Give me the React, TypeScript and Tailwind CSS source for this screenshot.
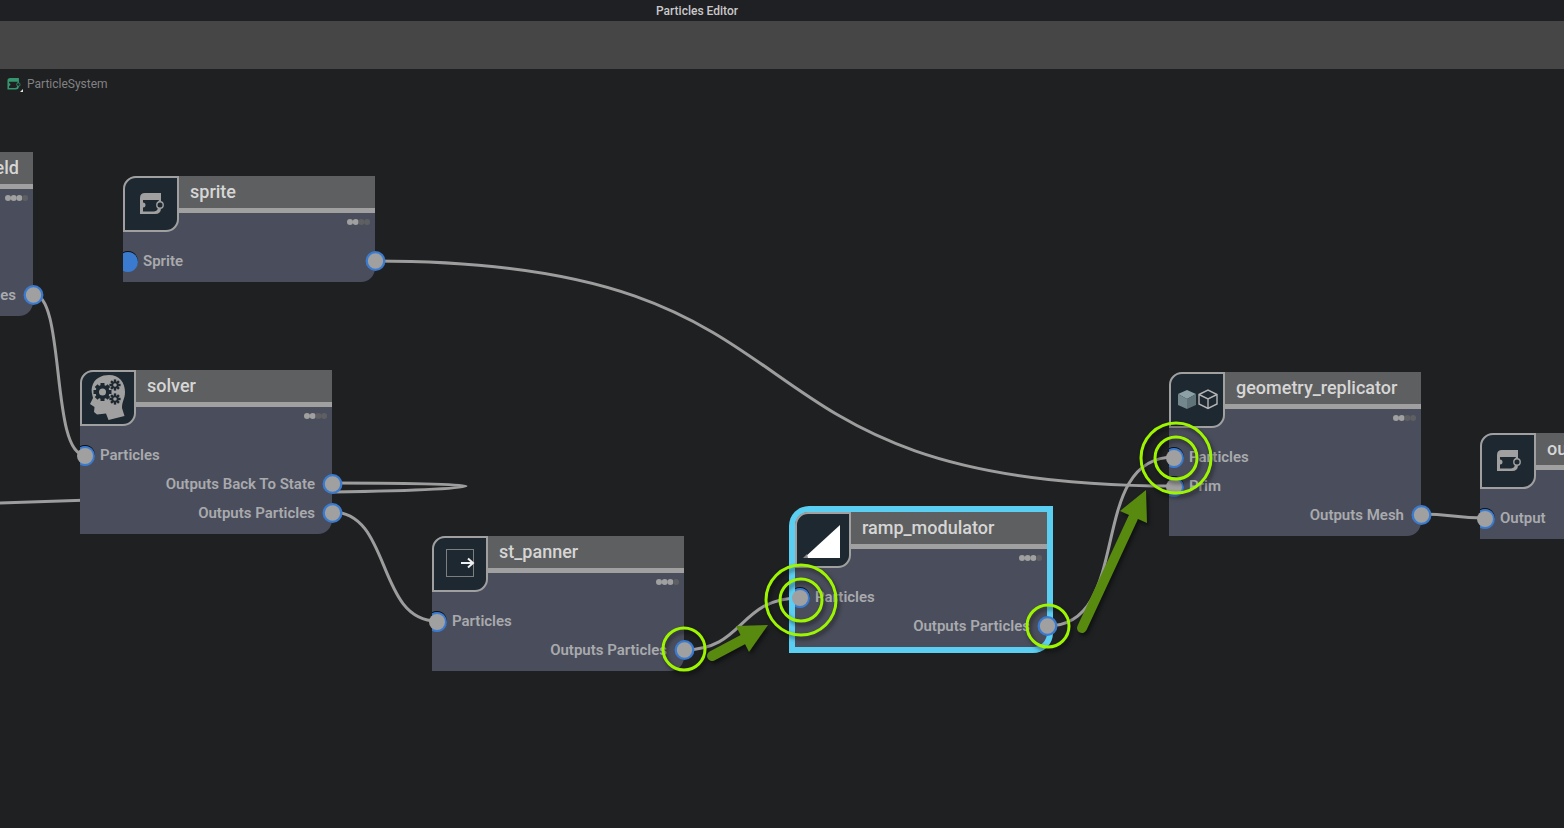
import type { ReactNode } from "react";
import { clsx } from "clsx";

type PortRow = {
    label?: string;
    side: "in" | "out";
    connected?: boolean;
    passThrough?: boolean;
};

type GraphNode = {
    id: string;
    title: string;
    place: string;
    icon: ReactNode;
    level: number;
    rows: PortRow[];
    selected?: boolean;
    alignEnd?: boolean;
};

function ParticleGlyph({ className }: { className?: string }) {
    return (
        <svg viewBox="0 0 24 22" className={className} fill="currentColor" aria-hidden="true">
            <path
                fillRule="evenodd"
                d="M0 21V5Q0 0 5 0H21V9V15Q21 21 15 21ZM3 7V9.500A2.500 2.500 0 0 1 3 14.500V18.500H14Q18 18 18 14V9L19 7Z"
            />
            <circle cx="20" cy="12" r="3.200" fill="#1e2830" stroke="currentColor" strokeWidth="1.400" />
        </svg>
    );
}

function Gear({ cx, cy, r, hole, width }: { cx: number; cy: number; r: number; hole: number; width: number }) {
    return (
        <g fill="#1e2830">
            <circle cx={cx} cy={cy} r={r - 2} />
            {[0, 45, 90, 135].map((a) => (
                <rect
                    key={a}
                    x={cx - width / 2}
                    y={cy - r}
                    width={width}
                    height={r * 2}
                    transform={`rotate(${a} ${cx} ${cy})`}
                />
            ))}
            <circle cx={cx} cy={cy} r={hole} fill="#a0a0a0" />
        </g>
    );
}

function HeadIcon() {
    return (
        <svg viewBox="0 0 52 52" className="size-full" aria-hidden="true">
            <path
                d="M10 15C12 6 20 3 27 3C37 3 43 10 43 20C43 27 40 29 40 36L42.500 44L26.500 48L24 41.500L15 42.500L12 40L12.500 35L8 32L11 26C10 22 9 18 10 15Z"
                fill="#a0a0a0"
            />
            <Gear cx={20.5} cy={20} r={9} hole={3.5} width={4} />
            <Gear cx={33} cy={13} r={5.6} hole={1.8} width={2.4} />
            <Gear cx={33} cy={27} r={5.6} hole={1.8} width={2.4} />
        </svg>
    );
}

function PannerIcon() {
    return (
        <svg viewBox="0 0 52 52" className="size-full" fill="none" aria-hidden="true">
            <rect x="12.5" y="11.5" width="27" height="27" stroke="#7c7f80" />
            <path d="M27 25H39M34 20.500L39 25L34 29.500" stroke="#f0f0f0" strokeWidth="2" />
        </svg>
    );
}

function RampIcon() {
    return (
        <svg viewBox="0 0 52 52" className="size-full" aria-hidden="true">
            <path d="M7 44L43 11V44Z" fill="#fff" />
            <path d="M6 44L10 40L11 44Z" fill="#8a8a8a" />
        </svg>
    );
}

function CubesIcon() {
    return (
        <svg viewBox="0 0 52 52" className="size-full" aria-hidden="true">
            <path d="M7 20L16 16L25 20L16 25Z" fill="#8da0a5" />
            <path d="M7 20L16 25V35L7 31Z" fill="#73878d" />
            <path d="M25 20L16 25V35L25 31Z" fill="#5f7379" />
            <path
                d="M28 20.500L37 16L46 20.500V30L37 34.500L28 30ZM28 20.500L37 25L46 20.500M37 25V34.500"
                fill="none"
                stroke="#b4b4b4"
                strokeWidth="1.4"
            />
        </svg>
    );
}

function InPort({ connected }: { connected?: boolean }) {
    return (
        <svg width="15" height="29" className="shrink-0 overflow-visible" aria-hidden="true">
            <path d="M0 5.300A10 10 0 1 1 0 22.700Z" fill="#0d1118" />
            <path d="M0 6.300A10 10 0 1 1 0 23.700Z" fill="#3a7bd0" />
            {connected ? <circle cx="5" cy="15" r="8" fill="#a0a0a0" /> : null}
        </svg>
    );
}

function OutPort() {
    return (
        <svg width="20" height="29" className="-mr-2.5 shrink-0 overflow-visible" aria-hidden="true">
            <circle cx="10.500" cy="14" r="8.800" fill="#a0a0a0" stroke="#3a7bd0" strokeWidth="2.300" />
        </svg>
    );
}

function LevelDots({ level }: { level: number }) {
    return (
        <svg width="24" height="8" aria-hidden="true">
            {[0, 1, 2, 3].map((i) => (
                <circle key={i} cx={i * 5.7 + 3} cy="4" r="3" fill={i < level ? "#a0a0a0" : "#5e5f62"} />
            ))}
        </svg>
    );
}

function Node({ node }: { node: GraphNode }) {
    return (
        <section
            aria-label={node.title}
            className={clsx(
                "absolute w-[252px] rounded-tl-[14px] rounded-br-[14px] bg-[#4a4e5c] pb-1.5",
                node.place,
                node.selected && "ring-6 ring-[#5bcff2]",
            )}
        >
            <header className="flex h-[71px] items-start">
                <div className="flex size-14 shrink-0 items-center justify-center rounded-tl-[13px] rounded-br-[13px] border-2 border-[#a0a0a0] bg-[#1e2830] text-[#a0a0a0]">
                    {node.icon}
                </div>
                <div className="flex min-w-0 grow flex-col items-end">
                    <h2
                        className={clsx(
                            "h-[37px] w-full border-b-5 border-[#a0a0a0] bg-[#5e5f60] px-[11px] text-lg leading-8 font-medium text-[#d6d6d6]",
                            node.alignEnd && "pr-[14px] text-right",
                        )}
                    >
                        {node.title}
                    </h2>
                    <div className="mt-[5px] mr-1">
                        <LevelDots level={node.level} />
                    </div>
                </div>
            </header>
            <ul className="text-[15px] font-semibold text-[#a9aaad]">
                {node.rows.map((row, i) => (
                    <li
                        key={i}
                        className={clsx("flex h-[29px] items-center", row.side === "in" ? "gap-[5px]" : "justify-end gap-[7px]")}
                    >
                        {row.label && row.side === "in" ? <InPort connected={row.connected} /> : null}
                        {row.label ? <span className={clsx(row.passThrough && "grow")}>{row.label}</span> : null}
                        {row.passThrough || (row.label && row.side === "out") ? <OutPort /> : null}
                    </li>
                ))}
            </ul>
        </section>
    );
}

const nodes: GraphNode[] = [
    {
        id: "field",
        title: "field",
        place: "left-[-219px] top-[83px]",
        icon: null,
        level: 3,
        alignEnd: true,
        rows: [{ side: "in" }, { side: "in" }, { side: "out", label: "Outputs Particles" }],
    },
    {
        id: "sprite",
        title: "sprite",
        place: "left-[123px] top-[107px]",
        icon: <ParticleGlyph className="ml-0.5 h-[22px] w-6" />,
        level: 2,
        rows: [{ side: "in", label: "Sprite", passThrough: true }],
    },
    {
        id: "solver",
        title: "solver",
        place: "left-[80px] top-[301px]",
        icon: <HeadIcon />,
        level: 2,
        rows: [
            { side: "in", label: "Particles", connected: true },
            { side: "out", label: "Outputs Back To State" },
            { side: "out", label: "Outputs Particles" },
        ],
    },
    {
        id: "st_panner",
        title: "st_panner",
        place: "left-[432px] top-[467px]",
        icon: <PannerIcon />,
        level: 3,
        rows: [
            { side: "in", label: "Particles", connected: true },
            { side: "out", label: "Outputs Particles" },
        ],
    },
    {
        id: "ramp_modulator",
        title: "ramp_modulator",
        place: "left-[795px] top-[443px]",
        icon: <RampIcon />,
        level: 3,
        selected: true,
        rows: [
            { side: "in", label: "Particles", connected: true },
            { side: "out", label: "Outputs Particles" },
        ],
    },
    {
        id: "geometry_replicator",
        title: "geometry_replicator",
        place: "left-[1169px] top-[303px]",
        icon: <CubesIcon />,
        level: 2,
        rows: [
            { side: "in", label: "Particles", connected: true },
            { side: "in", label: "Prim", connected: true },
            { side: "out", label: "Outputs Mesh" },
        ],
    },
    {
        id: "output",
        title: "output",
        place: "left-[1480px] top-[364px]",
        icon: <ParticleGlyph className="ml-0.5 h-[22px] w-6" />,
        level: 2,
        rows: [{ side: "in", label: "Output", connected: true }],
    },
];

// canvas coordinates, origin at the top left of the graph area
const wires = [
    "M33 225C66 225 50 386 85 386",
    "M375 192C855 192 695 417 1175 417",
    "M333 414C400 414 466 415 466 417C466 420 400 422 333 423C200 427 100 431 0 434",
    "M332 443C392 443 376 552 437 552",
    "M684 581C745 581 738 529 800 529",
    "M1047 557C1135 557 1085 388 1174 388",
    "M1421 445C1453 445 1453 449 1485 449",
];

const marks = [
    { cx: 684, cy: 580, r: 21 },
    { cx: 801, cy: 531, r: 35 },
    { cx: 801, cy: 531, r: 21 },
    { cx: 1048, cy: 557, r: 21 },
    { cx: 1176, cy: 389, r: 35 },
    { cx: 1176, cy: 389, r: 21 },
];

export default function App() {
    return (
        <div className="flex min-h-screen flex-col bg-[#1f2022] font-['Roboto',sans-serif]">
            <div className="flex h-[21px] items-center justify-center bg-[#1f2024] pr-[170px]">
                <h1 className="text-xs font-medium text-[#c9c9c9]">Particles Editor</h1>
            </div>
            <div className="h-12 bg-[#464646]" />
            <main className="relative grow overflow-hidden">
                <nav className="flex h-[30px] items-center gap-1 pl-[7px]">
                    <span className="relative flex w-4 text-[#35966f]">
                        <ParticleGlyph className="h-3 w-3.5" />
                        <svg width="3" height="3" className="absolute right-0 -bottom-0.5" aria-hidden="true">
                            <path d="M3 0V3H0Z" fill="#e0e0e0" />
                        </svg>
                    </span>
                    <a href="#particle-system" className="text-xs text-[#828282]">
                        ParticleSystem
                    </a>
                </nav>

                <svg className="absolute inset-0 size-full" fill="none" stroke="#9d9d9d" strokeWidth="3" aria-hidden="true">
                    {wires.map((d) => (
                        <path key={d} d={d} />
                    ))}
                </svg>

                {nodes.map((node) => (
                    <Node key={node.id} node={node} />
                ))}

                <svg
                    className="pointer-events-none absolute inset-0 size-full drop-shadow-[2px_3px_2px_rgba(0,0,0,0.5)]"
                    fill="none"
                    aria-hidden="true"
                >
                    <g stroke="#598a10" strokeWidth="10" strokeLinecap="round">
                        <path d="M712 587L744 570" />
                        <path d="M1082 559L1133 449" />
                    </g>
                    <g fill="#598a10">
                        <path d="M768 556L736 557L749 583Z" />
                        <path d="M1146 421L1120 442L1147 454Z" />
                    </g>
                    <g stroke="#9df500" strokeWidth="3">
                        {marks.map((m) => (
                            <circle key={`${m.cx}-${m.r}`} cx={m.cx} cy={m.cy} r={m.r} />
                        ))}
                    </g>
                </svg>
            </main>
        </div>
    );
}
